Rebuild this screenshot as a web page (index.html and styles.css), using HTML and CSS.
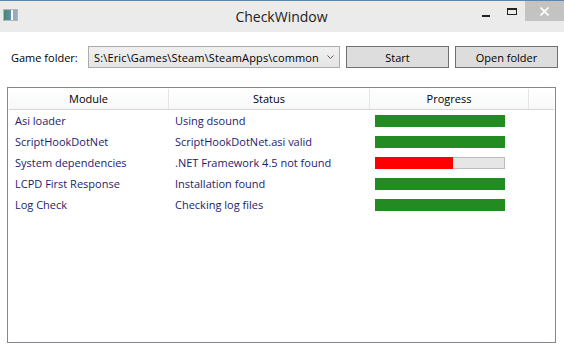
FILE: index.html
```html
<!DOCTYPE html>
<html lang="en">
<head>
  <meta charset="UTF-8">
  <title>CheckWindow</title>
  <link rel="stylesheet" href="styles.css">
</head>
<body>
  <div class="window">
    <!-- Title bar -->
    <div class="titlebar">
      <div class="app-icon"></div>
      <div class="title">CheckWindow</div>
      <div class="controls">
        <div class="ctl ctl-min"><span></span></div>
        <div class="ctl ctl-max"><span></span></div>
        <div class="ctl ctl-close">
          <svg width="9" height="9" viewBox="0 0 9 9">
            <path d="M0.5 0.5 L8.5 8.5 M8.5 0.5 L0.5 8.5" stroke="#fff" stroke-width="1.6"/>
          </svg>
        </div>
      </div>
    </div>

    <!-- Folder row -->
    <div class="toolbar">
      <label class="folder-label">Game folder:</label>
      <div class="combo">
        <span class="combo-text">S:\Eric\Games\Steam\SteamApps\common</span>
        <svg class="combo-arrow" width="7" height="4" viewBox="0 0 7 4">
          <path d="M0.5 0.5 L3.5 3.5 L6.5 0.5" stroke="#606060" stroke-width="1" fill="none"/>
        </svg>
      </div>
      <button class="btn">Start</button>
      <button class="btn">Open folder</button>
    </div>

    <!-- Module list -->
    <div class="list">
      <div class="list-head">
        <div class="col-head">Module</div>
        <div class="col-head">Status</div>
        <div class="col-head">Progress</div>
        <div class="col-head filler"></div>
      </div>
      <div class="row">
        <div class="cell">Asi loader</div>
        <div class="cell">Using dsound</div>
        <div class="cell"><div class="bar"><div class="fill ok" style="width: 100%"></div></div></div>
      </div>
      <div class="row">
        <div class="cell">ScriptHookDotNet</div>
        <div class="cell">ScriptHookDotNet.asi valid</div>
        <div class="cell"><div class="bar"><div class="fill ok" style="width: 100%"></div></div></div>
      </div>
      <div class="row">
        <div class="cell">System dependencies</div>
        <div class="cell">.NET Framework 4.5 not found</div>
        <div class="cell"><div class="bar"><div class="fill fail" style="width: 60%"></div></div></div>
      </div>
      <div class="row">
        <div class="cell">LCPD First Response</div>
        <div class="cell">Installation found</div>
        <div class="cell"><div class="bar"><div class="fill ok" style="width: 100%"></div></div></div>
      </div>
      <div class="row">
        <div class="cell">Log Check</div>
        <div class="cell">Checking log files</div>
        <div class="cell"><div class="bar"><div class="fill ok" style="width: 100%"></div></div></div>
      </div>
    </div>
  </div>
</body>
</html>
```

FILE: styles.css
```css
/* General */
body {
  margin: 0;
  font-family: 'Open Sans', 'Noto Sans', sans-serif;
  font-size: 11px;
  color: #000;
  background-color: #fff;
}

.window {
  width: 564px;
  height: 350px;
  display: flex;
  flex-direction: column;
  background-color: #fff;
  overflow: hidden;
}

/* Title bar */
.titlebar {
  height: 31px;
  display: flex;
  align-items: flex-start;
  background-color: #ebebeb;
  border-top: 1px solid #5f87ad;
}

.app-icon {
  width: 13px;
  height: 10px;
  margin: 8px 0 0 3px;
  border: 1px solid #b4b4b4;
  background: linear-gradient(90deg, #4a8a6a 0, #5f8fc0 55%, #fff 55%, #fff 70%, #9ab 70%);
}

.title {
  flex: 1;
  text-align: center;
  font-size: 14px;
  line-height: 16px;
  margin-top: 8px;
  padding-left: 72px;
  color: #222;
}

.controls {
  display: flex;
  align-items: flex-start;
}

.ctl {
  height: 20px;
  display: flex;
  align-items: center;
  justify-content: center;
}

.ctl-min {
  width: 26px;
}

.ctl-min span {
  display: block;
  width: 8px;
  height: 2px;
  background-color: #222;
  margin-top: 9px;
}

.ctl-max {
  width: 26px;
}

.ctl-max span {
  display: block;
  width: 8px;
  height: 4px;
  border: 1px solid #222;
  border-top-width: 2px;
}

.ctl-close {
  width: 39px;
  background-color: #c3c3c3;
}

/* Folder row */
.toolbar {
  display: flex;
  align-items: center;
  padding: 14px 6px 0 11px;
  height: 22px;
}

.folder-label {
  width: 77px;
  flex-shrink: 0;
}

.combo {
  width: 245px;
  height: 20px;
  flex-shrink: 0;
  border: 1px solid #acacac;
  background: linear-gradient(#f0f0f0, #e5e5e5);
  display: flex;
  align-items: center;
  padding-left: 5px;
  margin-right: 6px;
}

.combo-text {
  width: 228px;
  letter-spacing: 0.15px;
  white-space: nowrap;
  overflow: hidden;
}

.combo-arrow {
  margin-left: 5px;
}

.btn {
  width: 103px;
  height: 22px;
  flex-shrink: 0;
  font-family: inherit;
  font-size: 11px;
  color: #000;
  background-color: #dddddd;
  border: 1px solid #707070;
  padding: 0;
}

.btn + .btn {
  margin-left: 6px;
}

/* Module list */
.list {
  flex: 1;
  margin: 19px 8px 7px 7px;
  border: 1px solid #828790;
  padding: 1px;
}

.list-head {
  display: grid;
  grid-template-columns: 160px 201px 159px 1fr;
  height: 20px;
  border-bottom: 1px solid #d5d5d5;
  background: linear-gradient(#fff, #f7f8f9);
}

.col-head {
  text-align: center;
  line-height: 20px;
  border-right: 1px solid #e5e5e5;
}

.col-head.filler {
  border-right: none;
}

.row {
  display: grid;
  grid-template-columns: 160px 201px 159px;
  height: 21px;
  align-items: center;
  color: #1c1c6c;
}

.cell {
  padding-left: 6px;
  white-space: nowrap;
}

.cell:last-child {
  padding-left: 5px;
}

/* Progress bars */
.bar {
  width: 130px;
  height: 12px;
  background-color: #e6e6e6;
  box-shadow: inset 0 0 0 1px #bcbcbc;
}

.fill {
  height: 100%;
}

.fill.ok {
  background-color: #228b22;
}

.fill.fail {
  background-color: #ff0000;
}
```
